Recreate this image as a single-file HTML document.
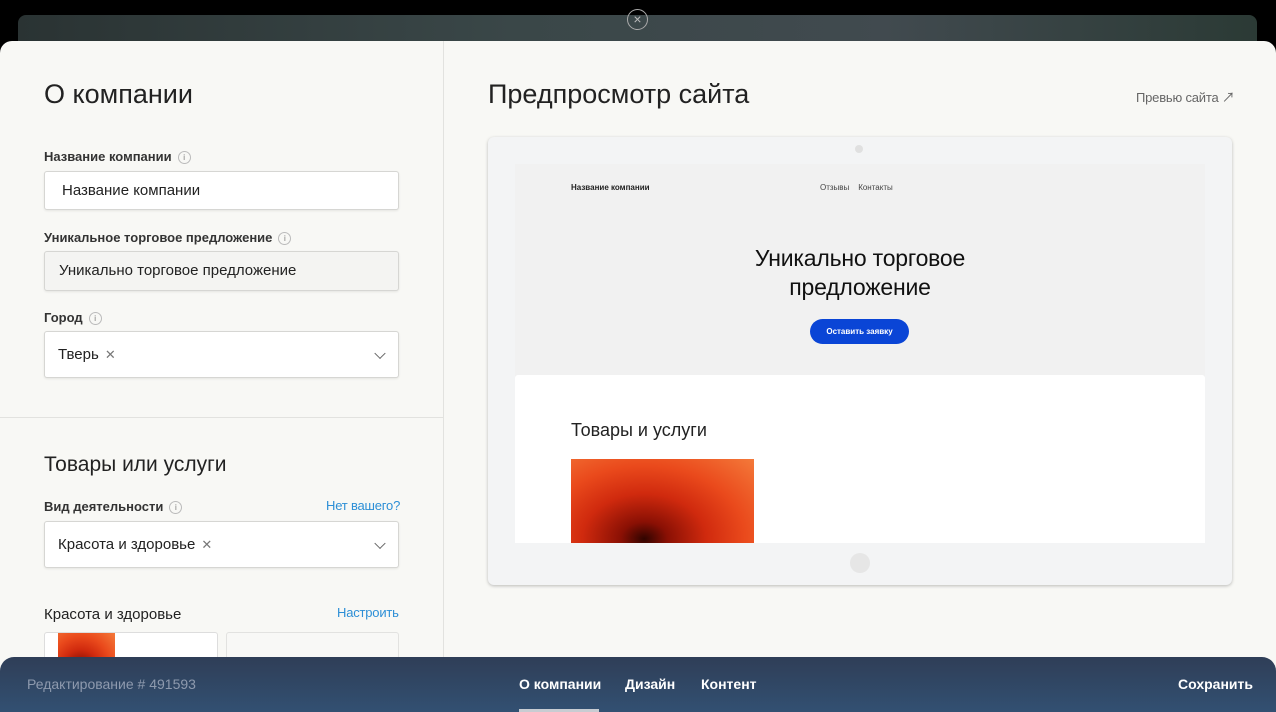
<!DOCTYPE html>
<html><head><meta charset="utf-8"><style>
*{box-sizing:border-box;margin:0;padding:0}
body{width:1276px;height:712px;overflow:hidden;background:#000;font-family:"Liberation Sans","Noto Sans CJK SC",sans-serif;position:relative;color:#222}
.strip{position:absolute;left:18px;top:15px;width:1239px;height:40px;border-radius:8px 8px 0 0;background:linear-gradient(90deg,#2a3333,#3a4748 40%,#414a4f 70%,#2b3a35)}
.close{position:absolute;left:627px;top:9px;width:21px;height:21px;border:1.5px solid #aaa;border-radius:50%;color:#bbb;font-size:14px;line-height:18px;text-align:center}
.modal{position:absolute;left:0;top:41px;width:1276px;height:671px;background:#f8f8f5;border-radius:12px 12px 0 0;overflow:hidden}
.div{position:absolute;left:443px;top:0;width:1px;height:620px;background:#e2e2df}
.hl{position:absolute;left:0;top:376px;width:443px;height:1px;background:#e2e2df}
h1{position:absolute;font-weight:400;font-size:27px;color:#222}
.lbl{position:absolute;left:44px;font-size:13px;font-weight:700;color:#333}
.i{display:inline-block;width:13px;height:13px;border:1px solid #bbb;border-radius:50%;font-size:8px;line-height:11px;text-align:center;color:#777;vertical-align:1px;margin-left:6px;font-weight:400}
.inp{position:absolute;left:44px;width:355px;background:#fff;border:1px solid #d6d6d3;border-radius:3px;font-size:15px;color:#222;padding-left:17px;box-shadow:0 1px 2px rgba(0,0,0,.08)}
.chev{position:absolute;right:14px;top:50%;width:8px;height:8px;border-right:1.5px solid #666;border-bottom:1.5px solid #666;transform:translateY(-70%) rotate(45deg)}
.x{color:#777;font-size:13px;margin-left:6px}
.link{position:absolute;font-size:13px;color:#2d8fd6}
.dev{position:absolute;left:488px;top:96px;width:744px;height:448px;background:#f3f4f5;border-radius:6px;box-shadow:0 1px 3px rgba(0,0,0,.25)}
.scr{position:absolute;left:27px;top:27px;width:690px;height:379px;background:#f1f1f1}
.white{position:absolute;left:0;top:211px;width:690px;height:168px;background:#fff;border-radius:3px 3px 0 0}
.foot{position:absolute;left:0;top:616px;width:1276px;height:55px;background:linear-gradient(#2f3e57,#325072);border-radius:14px 14px 0 0;color:#fff}
.foot span{position:absolute;top:19px;font-size:14px;font-weight:700}
.flower{background:radial-gradient(ellipse at 40% 95%,#300400 0,#8a1004 15%,#d02a0e 40%,#ea4a1c 65%,#f47a3a 100%)}
</style></head><body>
<div class="strip"></div>
<div class="close">×</div>
<div class="modal">
<div class="div"></div><div class="hl"></div>
<h1 style="left:44px;top:38px">О компании</h1>
<div class="lbl" style="top:108px">Название компании<span class="i">i</span></div>
<div class="inp" style="top:130px;height:39px;line-height:37px">Название компании</div>
<div class="lbl" style="top:189px">Уникальное торговое предложение<span class="i">i</span></div>
<div class="inp" style="top:210px;height:40px;line-height:38px;background:#f4f4f2;padding-left:14px">Уникально торговое предложение</div>
<div class="lbl" style="top:269px">Город<span class="i">i</span></div>
<div class="inp" style="top:290px;height:47px;line-height:45px;padding-left:13px">Тверь<span class="x">✕</span><div class="chev"></div></div>
<h1 style="left:44px;top:412px;font-size:21px">Товары или услуги</h1>
<div class="lbl" style="top:458px">Вид деятельности<span class="i">i</span></div>
<div class="link" style="left:326px;top:457px;letter-spacing:-0.2px">Нет вашего?</div>
<div class="inp" style="top:480px;height:47px;line-height:45px;padding-left:13px">Красота и здоровье<span class="x">✕</span><div class="chev"></div></div>
<div style="position:absolute;left:44px;top:565px;font-size:15px">Красота и здоровье</div>
<div class="link" style="left:337px;top:564px;letter-spacing:-0.2px">Настроить</div>
<div style="position:absolute;left:44px;top:591px;width:174px;height:40px;background:#fff;border:1px solid #ddd;border-radius:3px"><div class="flower" style="position:absolute;left:13px;top:0;width:57px;height:40px"></div></div>
<div style="position:absolute;left:226px;top:591px;width:173px;height:40px;background:#f8f8f6;border:1px solid #e2e2e0;border-radius:3px"></div>
<h1 style="left:488px;top:38px">Предпросмотр сайта</h1>
<div style="position:absolute;left:1136px;top:46px;font-size:13px;color:#666;letter-spacing:-0.2px">Превью сайта ↗</div>
<div class="dev">
<div style="position:absolute;left:367px;top:8px;width:8px;height:8px;border-radius:50%;background:#e0e0e0"></div>
<div class="scr">
<div style="position:absolute;left:56px;top:19px;font-size:8px;font-weight:700">Название компании</div>
<div style="position:absolute;left:305px;top:19px;font-size:8px;color:#444">Отзывы&nbsp;&nbsp;&nbsp;&nbsp;Контакты</div>
<div style="position:absolute;left:0;width:690px;top:80px;text-align:center;font-size:23px;line-height:29px;color:#111;letter-spacing:-0.2px">Уникально торговое<br>предложение</div>
<div style="position:absolute;left:295px;top:155px;width:99px;height:25px;border-radius:13px;background:#0a45d6;color:#fff;font-size:8px;font-weight:700;text-align:center;line-height:25px">Оставить заявку</div>
<div class="white">
<div style="position:absolute;left:56px;top:45px;font-size:18px;color:#222">Товары и услуги</div>
<div class="flower" style="position:absolute;left:56px;top:84px;width:183px;height:84px"></div>
</div></div>
<div style="position:absolute;left:362px;top:416px;width:20px;height:20px;border-radius:50%;background:#e6e6e6"></div>
</div>
<div class="foot">
<span style="left:27px;font-weight:400;color:#8e9aae">Редактирование # 491593</span>
<span style="left:519px">О компании</span>
<span style="left:625px">Дизайн</span>
<span style="left:701px">Контент</span>
<span style="left:1178px">Сохранить</span>
<div style="position:absolute;left:519px;top:52px;width:80px;height:3px;background:#c8ccd2"></div>
</div>
</div>
</body></html>
